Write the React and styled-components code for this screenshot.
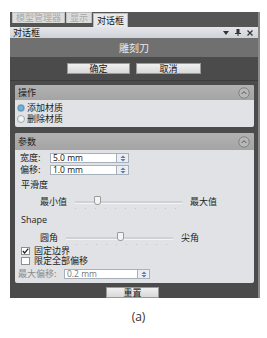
import styled, { createGlobalStyle } from 'styled-components';

const Global = createGlobalStyle`
  body {
    margin: 0;
    background: #fff;
    font-family: "Noto Sans CJK SC", "Noto Sans", sans-serif;
  }
`;

const Page = styled.div`
  width: 267px;
  height: 338px;
  padding: 12px 0 0 10px;
  box-sizing: border-box;
`;

const Panel = styled.div`
  width: 250px;
  height: 286px;
  background: #4b4b4b;
  border-right: 2px solid #8a8a8a;
  box-sizing: border-box;
  display: flex;
  flex-direction: column;
  line-height: 10px;
`;

const TabStrip = styled.div`
  height: 15px;
  display: flex;
  align-items: flex-end;
  gap: 1px;
  padding-left: 2px;
  background: #555;
`;

const Tab = styled.div`
  height: ${(p) => (p.$active ? 14 : 11)}px;
  margin-bottom: ${(p) => (p.$active ? 0 : 4)}px;
  padding: 0 ${(p) => p.$pad}px;
  display: flex;
  align-items: center;
  font-size: 9px;
  color: ${(p) => (p.$active ? '#111' : '#a9a9a9')};
  background: ${(p) => (p.$active ? '#e8e9ec' : '#dcdcdc')};
  border: 1px solid #bcbcbc;
  border-bottom: none;
  box-sizing: border-box;
`;

const TitleBar = styled.div`
  height: 11px;
  display: flex;
  align-items: center;
  padding: 0 5px 0 3px;
  background: linear-gradient(#e4e6ea, #cfd2d7);
  font-size: 9px;
  color: #111;
`;

const TitleText = styled.span`
  flex: 1;
`;

const TitleIcons = styled.div`
  display: flex;
  align-items: center;
  gap: 6px;
`;

const Header = styled.div`
  height: 19px;
  display: flex;
  align-items: center;
  justify-content: center;
  background: #707070;
  color: #ececec;
  font-size: 10px;
`;

const ButtonRow = styled.div`
  height: 24px;
  display: flex;
  justify-content: center;
  align-items: flex-start;
  padding-top: 6px;
  gap: 6px;
  box-sizing: border-box;
  border-bottom: 1px solid #3c3c3c;
`;

const Button = styled.div`
  width: ${(p) => p.$w}px;
  height: 11px;
  display: flex;
  align-items: center;
  justify-content: center;
  background: linear-gradient(#f0f0f0, #d8d8d8);
  border: 1px solid #9a9a9a;
  box-sizing: border-box;
  font-size: 9px;
  color: #111;
`;

const Groups = styled.div`
  padding: 4px 4px 0 5px;
  display: flex;
  flex-direction: column;
  gap: 6px;
`;

const Group = styled.div`
  border-radius: 2px;
  overflow: hidden;
  background: #e1e2e5;
`;

const GroupHead = styled.div`
  height: ${(p) => p.$h}px;
  display: flex;
  align-items: center;
  justify-content: space-between;
  padding: 0 4px 0 3px;
  background: linear-gradient(#b2b2b2, #a4a4a4);
  font-size: 9px;
  color: #222;
`;

const GroupBody = styled.div`
  height: ${(p) => p.$h}px;
  padding: 2px 2px 0 2px;
  box-sizing: border-box;
  display: flex;
  flex-direction: column;
  font-size: 9px;
  color: #222;
`;

const RadioRow = styled.div`
  height: 11px;
  display: flex;
  align-items: center;
  gap: 2px;
`;

const Radio = styled.span`
  width: 6px;
  height: 6px;
  border-radius: 50%;
  border: 1px solid #9aa;
  background: ${(p) => (p.$on ? 'radial-gradient(#6fb3e0 40%, #3d86c6 70%)' : '#f2f2f2')};
`;

const FieldRow = styled.div`
  height: 12px;
  margin-top: ${(p) => p.$mt || 0}px;
  display: flex;
  align-items: center;
  padding-left: ${(p) => p.$pl || 3}px;
  color: ${(p) => (p.$dim ? '#8a8a8a' : '#222')};
`;

const FieldLabel = styled.span`
  width: ${(p) => p.$w}px;
  white-space: nowrap;
`;

const Input = styled.div`
  width: ${(p) => p.$w}px;
  height: 10px;
  background: #fff;
  border: 1px solid #a8b0bc;
  box-sizing: border-box;
  font-family: "Open Sans", "DejaVu Sans", sans-serif;
  font-size: 8.5px;
  line-height: 8px;
  padding-left: 2px;
  color: ${(p) => (p.$dim ? '#777' : '#111')};
`;

const Spinner = styled.div`
  width: 12px;
  height: 10px;
  background: #eceef2;
  border: 1px solid #a8b0bc;
  border-left: none;
  box-sizing: border-box;
  display: flex;
  align-items: center;
  justify-content: center;
`;

const SubLabel = styled.div`
  height: ${(p) => p.$h}px;
  display: flex;
  align-items: center;
  padding-left: 4px;
  font-family: ${(p) => (p.$latin ? '"Open Sans", sans-serif' : 'inherit')};
`;

const SliderRow = styled.div`
  height: 16px;
  display: flex;
  align-items: center;
  padding-left: ${(p) => p.$pl}px;
  gap: 8px;
`;

const Track = styled.div`
  position: relative;
  width: ${(p) => p.$w}px;
  height: 2px;
  background: #cfd1d4;
  border-bottom: 1px solid #f4f4f4;
`;

const Thumb = styled.div`
  position: absolute;
  top: -5px;
  left: ${(p) => p.$x}px;
  width: 7px;
  height: 9px;
  background: #f4f4f4;
  border: 1px solid #9a9a9a;
  border-radius: 1px 1px 3px 3px;
  box-sizing: border-box;
`;

const Ticks = styled.div`
  position: absolute;
  top: 7px;
  left: 0;
  right: 0;
  height: 1px;
  background: repeating-linear-gradient(90deg, #c4c6c9 0 1px, transparent 1px 10px);
`;

const CheckRow = styled.div`
  height: 10px;
  display: flex;
  align-items: center;
  gap: 4px;
  padding-left: 4px;
`;

const Box = styled.span`
  width: 9px;
  height: 8px;
  background: #fff;
  border: 1px solid #8e8e8e;
  box-sizing: border-box;
  display: flex;
  align-items: center;
  justify-content: center;
`;

const Footer = styled.div`
  display: flex;
  justify-content: center;
  padding-top: 4px;
  padding-right: 3px;
`;

const Caption = styled.div`
  padding-top: 11px;
  width: 257px;
  text-align: center;
  font-family: "Open Sans", sans-serif;
  font-size: 12px;
  line-height: 16px;
  color: #333;
`;

const Collapse = () => (
  <svg width="12" height="12" viewBox="0 0 12 12">
    <circle cx="6" cy="6" r="5.2" fill="#b8b8b8" stroke="#7c7c7c" strokeWidth="0.9" />
    <path d="M3.6 7 L6 4.6 L8.4 7" fill="none" stroke="#555" strokeWidth="1" />
  </svg>
);

const Spin = () => (
  <Spinner>
    <svg width="6" height="7" viewBox="0 0 6 7">
      <path d="M0.5 3 L3 0.5 L5.5 3 Z" fill="#4f7fb4" />
      <path d="M0.5 4 L3 6.5 L5.5 4 Z" fill="#4f7fb4" />
    </svg>
  </Spinner>
);

const Check = () => (
  <svg width="7" height="6" viewBox="0 0 7 6">
    <path d="M0.8 3 L2.6 5 L6.3 0.6" fill="none" stroke="#222" strokeWidth="1.2" />
  </svg>
);

export default function App() {
  return (
    <Page>
      <Global />
      <Panel>
        <TabStrip>
          <Tab $pad={3}>模型管理器</Tab>
          <Tab $pad={3}>显示</Tab>
          <Tab $active $pad={3}>对话框</Tab>
        </TabStrip>
        <TitleBar>
          <TitleText>对话框</TitleText>
          <TitleIcons>
            <svg width="6" height="4" viewBox="0 0 6 4">
              <path d="M0 0 H6 L3 4 Z" fill="#333" />
            </svg>
            <svg width="6" height="7" viewBox="0 0 6 7">
              <path d="M1.5 0 H4.5 V4 H6 V5 H3.5 V7 H2.5 V5 H0 V4 H1.5 Z" fill="#333" />
            </svg>
            <svg width="6" height="6" viewBox="0 0 6 6">
              <path d="M0.5 0.5 L5.5 5.5 M5.5 0.5 L0.5 5.5" stroke="#333" strokeWidth="1.2" />
            </svg>
          </TitleIcons>
        </TitleBar>
        <Header>雕刻刀</Header>
        <ButtonRow>
          <Button $w={63}>确定</Button>
          <Button $w={65}>取消</Button>
        </ButtonRow>
        <Groups>
          <Group>
            <GroupHead $h={15}>
              <span>操作</span>
              <Collapse />
            </GroupHead>
            <GroupBody $h={27}>
              <RadioRow>
                <Radio $on />
                添加材质
              </RadioRow>
              <RadioRow>
                <Radio />
                删除材质
              </RadioRow>
            </GroupBody>
          </Group>
          <Group>
            <GroupHead $h={17}>
              <span>参数</span>
              <Collapse />
            </GroupHead>
            <GroupBody $h={133}>
              <FieldRow>
                <FieldLabel $w={30}>宽度:</FieldLabel>
                <Input $w={67}>5.0 mm</Input>
                <Spin />
              </FieldRow>
              <FieldRow>
                <FieldLabel $w={30}>偏移:</FieldLabel>
                <Input $w={67}>1.0 mm</Input>
                <Spin />
              </FieldRow>
              <SubLabel $h={18}>平滑度</SubLabel>
              <SliderRow $pl={23}>
                <span>最小值</span>
                <Track $w={107}>
                  <Thumb $x={19} />
                  <Ticks />
                </Track>
                <span>最大值</span>
              </SliderRow>
              <SubLabel $h={20} $latin>Shape</SubLabel>
              <SliderRow $pl={23}>
                <span>圆角</span>
                <Track $w={107}>
                  <Thumb $x={51} />
                  <Ticks />
                </Track>
                <span>尖角</span>
              </SliderRow>
              <CheckRow>
                <Box>
                  <Check />
                </Box>
                固定边界
              </CheckRow>
              <CheckRow>
                <Box />
                限定全部偏移
              </CheckRow>
              <FieldRow $dim $pl={1} $mt={2}>
                <FieldLabel $w={46}>最大偏移:</FieldLabel>
                <Input $w={74} $dim>0.2 mm</Input>
                <Spin />
              </FieldRow>
            </GroupBody>
          </Group>
        </Groups>
        <Footer>
          <Button $w={53}>重置</Button>
        </Footer>
      </Panel>
      <Caption>(a)</Caption>
    </Page>
  );
}
